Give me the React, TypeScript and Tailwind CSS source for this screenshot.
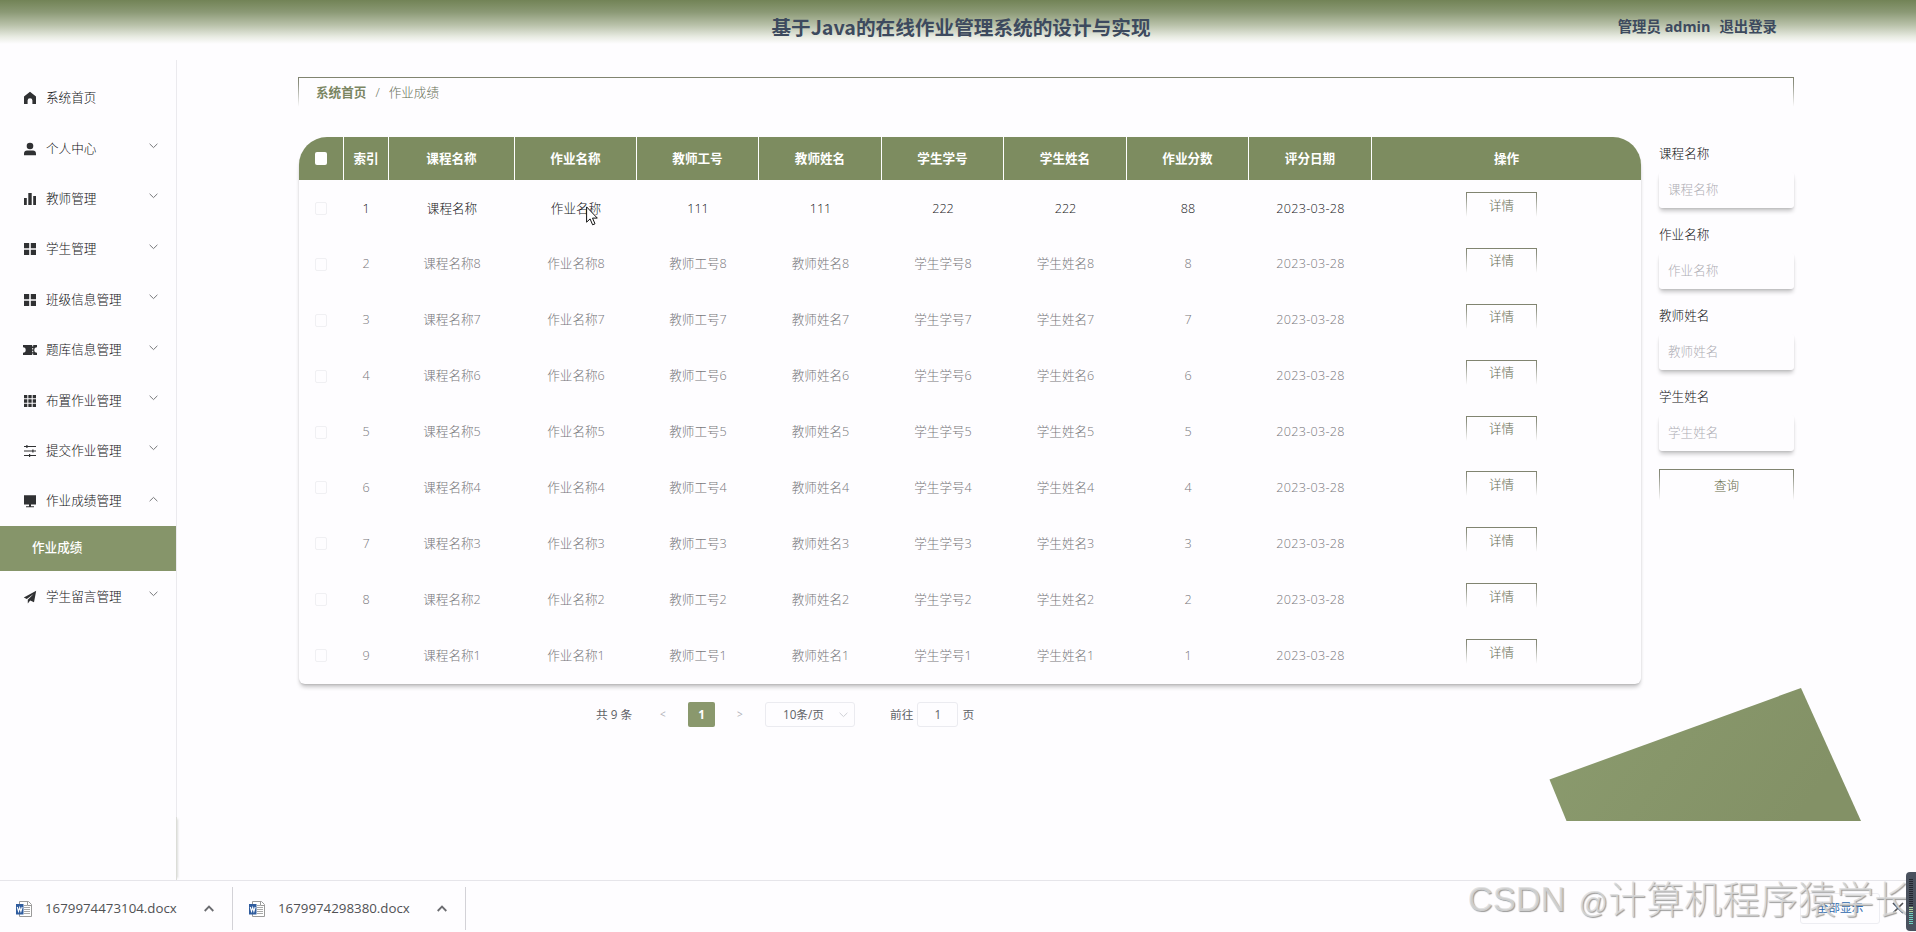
import { ReactNode } from 'react';

interface MenuItem {
  title: string;
  icon: ReactNode;
  open?: boolean;
  plain?: boolean;
  children?: string[];
}

const squares = (
  <path d="M1 1h5.2v5.2H1zM7.8 1H13v5.2H7.8zM1 7.8h5.2V13H1zM7.8 7.8H13V13H7.8z" />
);

const menu: MenuItem[] = [
  {
    title: '系统首页',
    plain: true,
    icon: <path d="M7 .8 13 5.6V13H9.4V9.6a2.4 2.4 0 0 0-4.8 0V13H1V5.6z" />,
  },
  {
    title: '个人中心',
    icon: (
      <>
        <circle cx="7" cy="4" r="3.3" />
        <path d="M1 13.2v-1.8c0-1.8 1.3-3 3-3h6c1.7 0 3 1.2 3 3v1.8z" />
      </>
    ),
  },
  {
    title: '教师管理',
    icon: <path d="M1 6h2.8v7H1zM5.3 1h3.4v12H5.3zM10.2 4H13v9h-2.8z" />,
  },
  { title: '学生管理', icon: squares },
  { title: '班级信息管理', icon: squares },
  {
    title: '题库信息管理',
    icon: (
      <path
        d="M0 2h9.2v1.6h1V2H14v2.3a2.7 2.7 0 0 0 0 5.4V12h-3.8v-1.6h-1V12H0V9.7a2.7 2.7 0 0 0 0-5.4zM9.2 5v1.5h1V5zM9.2 7.8v1.5h1V7.8z"
        fillRule="evenodd"
      />
    ),
  },
  {
    title: '布置作业管理',
    icon: (
      <path d="M1 1h3.3v3.3H1zM5.35 1h3.3v3.3h-3.3zM9.7 1H13v3.3H9.7zM1 5.35h3.3v3.3H1zM5.35 5.35h3.3v3.3h-3.3zM9.7 5.35H13v3.3H9.7zM1 9.7h3.3V13H1zM5.35 9.7h3.3V13h-3.3zM9.7 9.7H13V13H9.7z" />
    ),
  },
  {
    title: '提交作业管理',
    icon: (
      <path d="M1 2h12v1H1zM3.3 1h1.2v3H3.3zM1 6.5h12v1H1zM9.3 5.5h1.2v3H9.3zM1 11h12v1H1zM6 10h1.2v3H6z" />
    ),
  },
  {
    title: '作业成绩管理',
    open: true,
    icon: <path d="M1 1.2h12v9.4H1zM6 10.6h2v1.6h3v1H3v-1h3z" />,
    children: ['作业成绩'],
  },
  {
    title: '学生留言管理',
    icon: (
      <path d="M13.2.8 11 12.2 7.2 10.5 4.8 13.4V9.8L10.6 4 3.8 9 .8 7.6z" />
    ),
  },
];

const columns = [
  '课程名称',
  '作业名称',
  '教师工号',
  '教师姓名',
  '学生学号',
  '学生姓名',
  '作业分数',
  '评分日期',
];

const rows = [
  ['课程名称', '作业名称', '111', '111', '222', '222', '88', '2023-03-28'],
  ...[8, 7, 6, 5, 4, 3, 2, 1].map(n => [
    `课程名称${n}`,
    `作业名称${n}`,
    `教师工号${n}`,
    `教师姓名${n}`,
    `学生学号${n}`,
    `学生姓名${n}`,
    `${n}`,
    '2023-03-28',
  ]),
];

const filters = ['课程名称', '作业名称', '教师姓名', '学生姓名'];

const downloads = ['1679974473104.docx', '1679974298380.docx'];

const gridCols =
  'grid grid-cols-[45px_45px_126px_122px_122px_123px_122px_123px_122px_123px_1fr]';

const Chevron = ({ up = false }: { up?: boolean }) => (
  <svg
    className={up ? 'rotate-180' : ''}
    width="9"
    height="6"
    viewBox="0 0 9 6"
    fill="none"
    stroke="currentColor"
  >
    <path d="M.6.8 4.5 4.6 8.4.8" />
  </svg>
);

const Header = () => (
  <header className="grid h-[60px] shrink-0 grid-cols-[1fr_auto_1fr] bg-[linear-gradient(180deg,#728356_0px,#8b9975_12px,#b8c1a9_25px,#e9ece3_37px,#fefdff_44px)] font-bold text-[#3d4a5e]">
    <h1 className="col-start-2 ml-[6px] h-[53px] text-[19.65px] leading-[53px] whitespace-nowrap [font-family:'Noto_Sans_CJK_SC',sans-serif]">
      基于Java的在线作业管理系统的设计与实现
    </h1>
    <div className="mr-[139px] flex h-[54px] items-center justify-end gap-[9px] text-[14.4px] whitespace-nowrap">
      <span>管理员 admin</span>
      <span>退出登录</span>
    </div>
  </header>
);

const Sidebar = () => (
  <aside className="flex w-[177px] shrink-0 flex-col border-r border-[#ebeaee] text-[#111214]">
    <nav className="pt-[12.5px]">
      {menu.map(item => (
        <div key={item.title}>
          <div className="flex h-[50.4px] items-center pr-[18px] pl-[23px]">
            <svg
              className="mt-px mr-[9px]"
              width="14"
              height="14"
              viewBox="0 0 14 14"
              fill="#303133"
            >
              {item.icon}
            </svg>
            <span className="flex-1 pt-[2px]">{item.title}</span>
            {!item.plain && (
              <span className="mb-[4px] text-[#77787b]">
                <Chevron up={item.open} />
              </span>
            )}
          </div>
          {item.children?.map(child => (
            <div
              key={child}
              className="flex h-[44.8px] items-center bg-[#86956a] pt-px pl-8 font-medium text-white"
            >
              {child}
            </div>
          ))}
        </div>
      ))}
    </nav>
    <div className="mt-auto -mr-px h-[63px] border-r border-[#dcddd8] shadow-[3px_0_2px_-2px_rgba(80,90,70,0.2)]" />
  </aside>
);

const Cursor = () => (
  <svg
    className="absolute top-[26px] left-[71px]"
    width="13"
    height="21"
    viewBox="0 0 13 21"
    fill="#fff"
    stroke="#111"
  >
    <path d="M.6.9v15.3l3.5-3.3 2.5 5.9 2.4-1-2.5-5.7h4.8z" />
  </svg>
);

const ScoreTable = () => (
  <section className="w-[1342px] rounded-t-[30px] rounded-b-[6px] pb-[1px] shadow-[0_4px_4px_-1px_rgba(0,0,0,0.22),0_1px_2px_rgba(0,0,0,0.1)]">
    <div
      className={`${gridCols} h-[43px] overflow-hidden rounded-t-[28px] bg-[#7d8c60] font-bold text-white`}
    >
      <div className="flex items-center justify-center border-r border-white">
        <span className="mr-px h-[13px] w-3 rounded-[2px] bg-white" />
      </div>
      {['索引', ...columns].map(title => (
        <div
          key={title}
          className="flex items-center justify-center border-r border-white pt-px"
        >
          {title}
        </div>
      ))}
      <div className="flex items-center justify-center pt-px">操作</div>
    </div>

    {rows.map((row, i) => (
      <div
        key={i}
        className={`${gridCols} h-[55.9px] ${i === 0 ? 'text-[#151618]' : 'text-[#77777b]'}`}
      >
        <div className="flex items-center justify-center pt-px">
          <span className="mr-[2px] h-[13px] w-3 rounded-[2px] border border-[#f0f0f3]" />
        </div>
        <div className="flex items-center justify-center pt-[2px] pr-px">
          {i + 1}
        </div>
        {row.map((cell, j) => (
          <div
            key={j}
            className={`relative flex items-center justify-center pt-[2px] ${j === 7 ? 'tracking-[0.3px]' : ''}`}
          >
            {cell}
            {i === 0 && j === 1 && <Cursor />}
          </div>
        ))}
        <div className="pt-3 pl-[94px]">
          <button className="block h-[27px] w-[71px] border pt-px text-[#666b52] [border-image:linear-gradient(180deg,#80836f_0%,#8c8f80_20%,#fefdff_92%)_1]">
            详情
          </button>
        </div>
      </div>
    ))}
  </section>
);

const Filters = () => (
  <aside className="ml-[18px] w-[135px] pt-[5px]">
    {filters.map(name => (
      <div key={name} className="h-[81px]">
        <div className="h-6 leading-6 text-[#111214]">{name}</div>
        <div className="mt-[6px] flex h-9 items-center rounded-[3px] pl-[9px] text-[#aeadb4] shadow-[0_4px_4px_-1px_rgba(0,0,0,0.22),0_1px_2px_rgba(0,0,0,0.07)]">
          {name}
        </div>
      </div>
    ))}
    <button className="mt-[3px] block h-[34px] w-full border text-[#666b48] [border-image:linear-gradient(180deg,#80836f_0%,#8c8f80_20%,#fefdff_92%)_1]">
      查询
    </button>
  </aside>
);

const Pagination = () => (
  <div className="mt-[18px] flex h-[25px] items-center pl-[297px] text-[11.7px] font-normal text-[#606266]">
    <span className="w-[64px]">共 9 条</span>
    <span className="w-[28px] text-[10px] text-[#b0b1b8]">&lt;</span>
    <span className="flex h-[25px] w-[27px] items-center justify-center rounded-[2px] bg-[#8a986d] font-bold text-white">
      1
    </span>
    <span className="ml-[22px] w-[28px] text-[10px] text-[#b0b1b8]">&gt;</span>
    <div className="flex h-[25px] w-[90px] items-center justify-between rounded-[3px] border border-[#ebebf0] pr-[6px] pl-[17px]">
      <span>10条/页</span>
      <span className="text-[#cfd0d6]">
        <Chevron />
      </span>
    </div>
    <span className="ml-[35px]">前往</span>
    <span className="mx-[4px] flex h-[25px] w-[41px] items-center justify-center rounded-[3px] border border-[#ebebf0]">
      1
    </span>
    <span>页</span>
  </div>
);

const WordIcon = () => (
  <svg width="16" height="16" viewBox="0 0 16 16">
    <path d="M3.5.5h9l3 3v12h-12z" fill="#fff" stroke="#9a9a9a" />
    <path d="M11.5.5v4h4" fill="none" stroke="#9a9a9a" />
    <path
      d="M8 4.5h3M8 6.5h6M8 8.5h6M8 10.5h6M8 12.5h6"
      stroke="#a9a9a9"
    />
    <path d="M0 3h7.5v10.5H0z" fill="#2f5c9e" />
    <path
      d="M1.3 6 2.5 10.3 3.7 6.6 4.9 10.3 6.2 6"
      fill="none"
      stroke="#fff"
      strokeWidth="1.1"
    />
  </svg>
);

const DownloadBar = () => (
  <footer className="relative flex h-[52px] shrink-0 border-t border-[#e6e5ea] pt-[6px] font-normal text-[#505154]">
    {downloads.map(file => (
      <div
        key={file}
        className="flex h-[43px] w-[233px] items-center border-r border-[#d3d2d7] pl-4 text-[13.3px]"
      >
        <WordIcon />
        <span className="ml-[13px] flex-1">{file}</span>
        <svg
          className="mr-[18px]"
          width="10"
          height="7"
          viewBox="0 0 10 7"
          fill="none"
          stroke="#6b6c70"
          strokeWidth="1.8"
        >
          <path d="M.7 6 5 1.6 9.3 6" />
        </svg>
      </div>
    ))}
    <div className="mt-[5px] mr-3 ml-auto flex h-8 items-center">
      <span className="flex h-[31px] w-20 items-center justify-center rounded-[3px] border border-[#ededf2] text-[11.7px] text-[#2d68ad]">
        全部显示
      </span>
      <svg
        className="ml-3"
        width="12"
        height="12"
        viewBox="0 0 12 12"
        stroke="#505154"
        strokeWidth="1.7"
      >
        <path d="M1 1l10 10M11 1 1 11" />
      </svg>
    </div>

    <div className="pointer-events-none absolute top-[-8px] right-[4px] flex h-[54px] items-center gap-[13px] text-[38px] font-light whitespace-nowrap text-[#dcdcdc]/80 [font-family:'Liberation_Sans','Noto_Sans_CJK_SC',sans-serif] [text-shadow:1px_1px_1px_#9a9a9a]">
      <span className="text-[34.5px]">CSDN</span>
      <span>
        <span className="text-[29px]">@</span>计算机程序猿学长
      </span>
    </div>

    <div className="absolute top-[-9px] right-0 flex h-[59px] w-[10px] flex-col items-center gap-px rounded-l-[4px] bg-[#4a515e] pt-[7px]">
      {Array.from({ length: 23 }, (_, i) => (
        <span
          key={i}
          className={`h-px w-1 shrink-0 ${i < 14 ? 'bg-[#23272f]' : i < 17 ? 'bg-[#a9cf9a]' : 'bg-[#6fd0c0]'}`}
        />
      ))}
    </div>
  </footer>
);

export default function App() {
  return (
    <div className="flex h-[932px] w-[1916px] flex-col overflow-hidden bg-[#fefdff] text-[12.6px] font-light [font-family:'Open_Sans','Noto_Sans_CJK_SC',sans-serif]">
      <Header />
      <div className="flex min-h-0 flex-1">
        <Sidebar />
        <main className="relative flex-1 pt-[17px] pl-[121px]">
          <div className="flex h-[33px] w-[1496px] items-center gap-[9px] border pl-[17px] text-[#666d55] [border-image:linear-gradient(180deg,#80836f_0%,#8c8f80_20%,#fefdff_90%)_1]">
            <span className="font-bold text-[#7b8663]">系统首页</span>
            <span>/</span>
            <span>作业成绩</span>
          </div>
          <div className="mt-[27px] ml-px flex">
            <div>
              <ScoreTable />
              <Pagination />
            </div>
            <Filters />
          </div>
          <svg
            className="absolute right-[55px] bottom-[59px]"
            width="312"
            height="133"
            viewBox="0 0 312 133"
          >
            <defs>
              <linearGradient id="shape" x1="0" y1="0" x2="1" y2="0.3">
                <stop offset="0" stopColor="#8b9b6e" />
                <stop offset="1" stopColor="#839166" />
              </linearGradient>
            </defs>
            <path d="M.5 91.5 252 0l60 133H17.5z" fill="url(#shape)" />
          </svg>
        </main>
      </div>
      <DownloadBar />
    </div>
  );
}
